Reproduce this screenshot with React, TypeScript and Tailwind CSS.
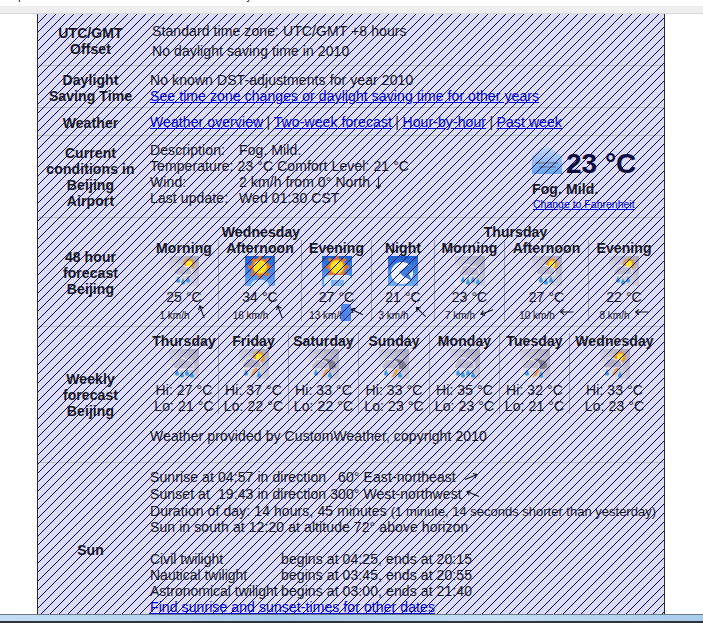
import React from "react";

type Kind = "partly" | "rain" | "sun" | "sunCloud" | "moon" | "stormSun" | "storm" | "fog";

function Drops({ xs }: { xs: number[] }) {
  return (
    <g fill="#3f9be0">
      {xs.map((x, i) => (
        <path key={i} d={`M${x} ${20 + (i % 2) * 2}l-2.2 5a2.3 2.3 0 0 0 4.4 0z`} />
      ))}
    </g>
  );
}

function WeatherIcon({ kind }: { kind: Kind }) {
  const grey = kind === "partly" || kind === "rain" || kind === "stormSun" || kind === "storm";
  return (
    <svg width="30" height="30" viewBox="0 0 30 30" className="block shrink-0">
      <defs>
        <linearGradient id="wg" x1="1" y1="0" x2="0" y2="1">
          <stop offset="0" stopColor="#a6a6b6" />
          <stop offset="1" stopColor="#eeeef8" />
        </linearGradient>
        <linearGradient id="wb" x1="0" y1="0" x2="0" y2="1">
          <stop offset="0" stopColor="#1b63d0" />
          <stop offset="1" stopColor="#6fb0ef" />
        </linearGradient>
        <linearGradient id="wf" x1="0" y1="0" x2="0" y2="1">
          <stop offset="0" stopColor="#c8d8f4" />
          <stop offset="1" stopColor="#62a8ea" />
        </linearGradient>
      </defs>
      {grey && <rect width="30" height="30" fill="url(#wg)" />}
      {(kind === "sun" || kind === "sunCloud" || kind === "moon") && <rect width="30" height="30" fill="url(#wb)" />}
      {(kind === "partly" || kind === "stormSun") && (
        <g>
          <circle cx="20" cy="8" r="6" fill="#d89a50" />
          <circle cx="20" cy="8" r="3.2" fill="#ffe22a" />
        </g>
      )}
      {kind === "partly" && (
        <g>
          <path d="M6 19c-2-1-2-5 1-6 1-4 7-5 10-2 3-1 6 1 6 4v4z" fill="#bcbccc" stroke="#f2f2f8" />
          <Drops xs={[9, 14, 19]} />
        </g>
      )}
      {kind === "rain" && (
        <g>
          <path d="M7 20c-3 0-4-4-1-6 0-5 8-7 11-3 4-1 8 2 7 6 1 2 0 3-2 3z" fill="#bcbccc" stroke="#f2f2f8" />
          <Drops xs={[8, 13, 18, 23]} />
        </g>
      )}
      {kind === "stormSun" && (
        <g>
          <path d="M5 19c-2-1-2-5 1-6 1-4 7-5 10-2 3-1 6 1 6 4v4z" fill="#b0b0c0" stroke="#f2f2f8" />
          <path d="M11 28l5-9h3l-3 6z" fill="#e89a50" />
          <Drops xs={[7, 20]} />
        </g>
      )}
      {kind === "storm" && (
        <g>
          <path d="M10 16c0-5 7-8 11-5 4 0 7 3 6 7l-3 2H12z" fill="#80808e" />
          <path d="M4 20c-2-1-2-5 1-6 1-4 7-5 10-2 3 0 5 3 4 8z" fill="#bcbcca" stroke="#f2f2f8" />
          <path d="M12 29l5-9h3l-3 6z" fill="#e89a50" />
          <Drops xs={[7, 21]} />
        </g>
      )}
      {(kind === "sun" || kind === "sunCloud") && (
        <g>
          <g stroke="#d8703a" strokeWidth="3.4">
            {[0, 45, 90, 135].map((a) => (
              <path key={a} d="M3 11H27" transform={`rotate(${a} 15 11)`} />
            ))}
          </g>
          <circle cx="15" cy="11" r="9" fill="#d8803a" />
          <circle cx="15" cy="11" r="6.8" fill="#ffe21e" />
          <path
            d={kind === "sun" ? "M6 30c0-5 4-7 9-6 4-1 9 2 9 6z" : "M2 24c0-3 3-5 8-5h15c3 0 5 2 5 5v6H2z"}
            fill="#cfe2f8"
          />
          {kind === "sunCloud" && <rect x="9" y="24" width="13" height="6" fill="#7fb4ea" />}
        </g>
      )}
      {kind === "moon" && (
        <g>
          <circle cx="14" cy="17" r="11" fill="#eef4fd" />
          <path d="M11 16l10-7 8 2-8 7 3 7-9-5z" fill="#3f7fd8" />
        </g>
      )}
      {kind === "fog" && (
        <g>
          <path d="M0 30V12C4 10 6 4 14 2c6 2 9 6 16 10v18z" fill="url(#wf)" />
          <rect x="4" y="18" width="22" height="2" fill="#7c90b4" />
          <rect x="7" y="22" width="17" height="2" fill="#6f8cb8" />
        </g>
      )}
    </svg>
  );
}

function Arrow({ angle, size = 14 }: { angle: number; size?: number }) {
  return (
    <svg width={size} height={size} viewBox="-7 -7 14 14" className="block shrink-0">
      <g transform={`rotate(${angle})`} fill="none" stroke="#111" strokeWidth="1.1">
        <path d="M-6.5 0H6.5M3 -2.6L6.5 0L3 2.6" />
      </g>
    </svg>
  );
}

function Divided({ children, last, className = "" }: { children: React.ReactNode; last?: boolean; className?: string }) {
  return (
    <div className={`flex flex-col items-center ${last ? "" : "border-r border-[#9a9aa8]"} ${className}`}>{children}</div>
  );
}

const forecast: { l: string; k: Kind; t: string; w: string; a: number }[] = [
  { l: "Morning", k: "partly", t: "25 °C", w: "1 km/h", a: 250 },
  { l: "Afternoon", k: "sun", t: "34 °C", w: "16 km/h", a: 250 },
  { l: "Evening", k: "sunCloud", t: "27 °C", w: "13 km/h", a: 205 },
  { l: "Night", k: "moon", t: "21 °C", w: "3 km/h", a: 225 },
  { l: "Morning", k: "rain", t: "23 °C", w: "7 km/h", a: 160 },
  { l: "Afternoon", k: "partly", t: "27 °C", w: "10 km/h", a: 180 },
  { l: "Evening", k: "partly", t: "22 °C", w: "8 km/h", a: 180 },
];

const weekly: { l: string; k: Kind; h: string; o: string }[] = [
  { l: "Thursday", k: "rain", h: "Hi: 27 °C", o: "Lo: 21 °C" },
  { l: "Friday", k: "stormSun", h: "Hi: 37 °C", o: "Lo: 22 °C" },
  { l: "Saturday", k: "storm", h: "Hi: 33 °C", o: "Lo: 22 °C" },
  { l: "Sunday", k: "storm", h: "Hi: 33 °C", o: "Lo: 23 °C" },
  { l: "Monday", k: "rain", h: "Hi: 35 °C", o: "Lo: 23 °C" },
  { l: "Tuesday", k: "storm", h: "Hi: 32 °C", o: "Lo: 21 °C" },
  { l: "Wednesday", k: "stormSun", h: "Hi: 33 °C", o: "Lo: 23 °C" },
];

function Row({
  label,
  h,
  children,
  labelClass = "",
}: {
  label: React.ReactNode;
  h: string;
  children: React.ReactNode;
  labelClass?: string;
}) {
  return (
    <div className={`flex shrink-0 border-b border-[#b4bcb8] ${h}`}>
      <div className={`w-[105px] shrink-0 text-center font-bold flex items-center justify-center ${labelClass}`}>
        <div>{label}</div>
      </div>
      <div className="flex-1 pl-[7px]">{children}</div>
    </div>
  );
}

const Link = ({ children, className = "" }: { children: React.ReactNode; className?: string }) => (
  <a className={`text-[#0000e0] underline ${className}`}>{children}</a>
);

const Sep = () => <span className="-mx-[0.6px]"> | </span>;

function Hatch() {
  return (
    <svg className="absolute inset-0 w-full h-full pointer-events-none" shapeRendering="crispEdges">
      <defs>
        <pattern id="hatch" width="9" height="9" patternUnits="userSpaceOnUse">
          {Array.from({ length: 9 }, (_, i) => (
            <rect key={i} x={i} y={8 - i} width="1" height="1" fill="#00006e" />
          ))}
        </pattern>
      </defs>
      <rect width="100%" height="100%" fill="url(#hatch)" />
    </svg>
  );
}

export default function App() {
  return (
    <div className="h-[623px] w-[703px] overflow-hidden bg-white flex flex-col font-['Liberation_Sans',Arial,sans-serif] text-[14px] leading-4 text-[#1a1a1a]">
      <div className="h-[6px] shrink-0 overflow-hidden">
        <div className="-mt-[9px] h-[15px] font-['Liberation_Mono',monospace] text-[10px] leading-[14px] text-black whitespace-nowrap">
          http://www.timeanddate.com/worldclock/city.html?n=33
        </div>
      </div>
      <div className="h-[8px] shrink-0 bg-[#eeeeee] border-b border-[#d8d8d8]" />
      <div className="relative flex-1 min-h-0 mx-[37px] w-[628px] border-x border-[#2a2a2a] bg-[#dcdcf4] overflow-hidden tracking-[0.09px]">
        <Row h="h-[52px]" labelClass="pt-[2px]" label={<>UTC/GMT<br />Offset</>}>
          <div className="pt-[7px] pl-[2px] leading-5">
            <div>Standard time zone: UTC/GMT +8 hours</div>
            <div>No daylight saving time in 2010</div>
          </div>
        </Row>
        <Row h="h-[42px]" labelClass="pt-[2px]" label={<>Daylight<br />Saving Time</>}>
          <div className="pt-[6px]">
            <div>No known DST-adjustments for year 2010</div>
            <Link>See time zone changes or daylight saving time for other years</Link>
          </div>
        </Row>
        <Row h="h-[28px]" labelClass="pt-[2px]" label="Weather">
          <div className="pt-[6px] whitespace-pre">
            <Link>Weather overview</Link><Sep /><Link>Two-week forecast</Link><Sep /><Link>Hour-by-hour</Link><Sep /><Link>Past week</Link>
          </div>
        </Row>
        <Row h="h-[82px]" label={<>Current<br />conditions in<br />Beijing<br />Airport</>} labelClass="pt-[1px]">
          <div className="flex">
            <div className="w-[382px] pt-[6px]">
              <div className="grid grid-cols-[89px_1fr]">
                <div>Description:</div>
                <div>Fog. Mild.</div>
              </div>
              <div>Temperature: 23 °C Comfort Level: 21 °C</div>
              <div className="grid grid-cols-[89px_1fr]">
                <div>Wind:</div>
                <div className="flex items-center gap-[2px]">
                  2 km/h from 0° North
                  <Arrow angle={92} size={13} />
                </div>
              </div>
              <div className="grid grid-cols-[89px_1fr]">
                <div>Last update:</div>
                <div>Wed 01:30 CST</div>
              </div>
            </div>
            <div className="pt-[8px] tracking-normal">
              <div className="flex items-center gap-[4px] h-[30px]">
                <WeatherIcon kind="fog" />
                <span className="text-[28px] leading-8 font-bold text-[#10103a] mt-[10px]">23 °C</span>
              </div>
              <div className="mt-[7px] font-bold tracking-[0.12px]">Fog. Mild.</div>
              <Link className="block text-[10.5px] leading-[14px] pl-[1px]">Change to Fahrenheit</Link>
            </div>
          </div>
        </Row>
        <Row h="h-[109px]" label={<>48 hour<br />forecast<br />Beijing</>} labelClass="pt-[2px]">
          <div className="relative pt-[6px] grid grid-cols-[69px_83px_70px_63px_70px_84px_70px]">
            <div className="col-span-3 text-center font-bold h-4">Wednesday</div>
            <div className="col-span-4 text-center font-bold h-4">Thursday</div>
            {forecast.map((f, i) => (
              <Divided key={i} last={i === 6} className="h-[81px]">
                <div className="font-bold whitespace-nowrap">{f.l}</div>
                <WeatherIcon kind={f.k} />
                <div className="mt-[3px]">{f.t}</div>
                <div className="flex items-start gap-[5px] h-4 text-[10px] tracking-normal whitespace-nowrap">
                  <span className="mt-[3px]">{f.w}</span>
                  <Arrow angle={f.a} />
                </div>
              </Divided>
            ))}
            <div className="absolute left-[191px] top-[86px] w-[10px] h-[17px] bg-[#3d7fe8] opacity-90" />
          </div>
        </Row>
        <Row h="h-[136px]" label={<>Weekly<br />forecast<br />Beijing</>} labelClass="pt-[0px]">
          <div className="pt-[6px]">
            <div className="grid grid-cols-[69px_70px_70px_71px_70px_70px_89px]">
              {weekly.map((d, i) => (
                <Divided key={i} last={i === 6} className="h-[81px]">
                  <div className="font-bold whitespace-nowrap">{d.l}</div>
                  <WeatherIcon kind={d.k} />
                  <div className="mt-[3px] whitespace-nowrap">{d.h}</div>
                  <div className="whitespace-nowrap">{d.o}</div>
                </Divided>
              ))}
            </div>
            <div className="mt-[14px]">Weather provided by CustomWeather, copyright 2010</div>
          </div>
        </Row>
        <div className="flex">
          <div className="w-[105px] shrink-0 text-center font-bold pt-[79px]">Sun</div>
          <div className="flex-1 pl-[7px] pt-[6px] whitespace-pre">
            <div className="flex items-center gap-[8px]">
              Sunrise at 04:57 in direction   60° East-northeast
              <Arrow angle={-22} />
            </div>
            <div className="flex items-center gap-[4px] mt-[1px]">
              Sunset at  19:43 in direction 300° West-northwest
              <Arrow angle={202} />
            </div>
            <div className="mt-[1px]">
              Duration of day: 14 hours, 45 minutes <span className="text-[13px] tracking-normal">(1 minute, 14 seconds shorter than yesterday)</span>
            </div>
            <div className="-mt-[1px]">Sun in south at 12:20 at altitude 72° above horizon</div>
            <div className="h-4" />
            <div className="grid grid-cols-[131px_1fr]"><div className="tracking-normal">Civil twilight</div><div>begins at 04:25, ends at 20:15</div></div>
            <div className="grid grid-cols-[131px_1fr]"><div className="tracking-normal">Nautical twilight</div><div>begins at 03:45, ends at 20:55</div></div>
            <div className="grid grid-cols-[131px_1fr]"><div className="tracking-normal">Astronomical twilight</div><div>begins at 03:00, ends at 21:40</div></div>
            <Link>Find sunrise and sunset-times for other dates</Link>
          </div>
        </div>
        <Hatch />
      </div>
      <div className="h-[9px] shrink-0 border-t border-[#6b7a88] bg-[linear-gradient(90deg,#c4def4,#a8cbeb_40%,#c6dff4_70%,#a9ccec)] relative">
        <div className="absolute left-0 right-0 bottom-0 h-[2px] bg-[#333]" />
      </div>
    </div>
  );
}
